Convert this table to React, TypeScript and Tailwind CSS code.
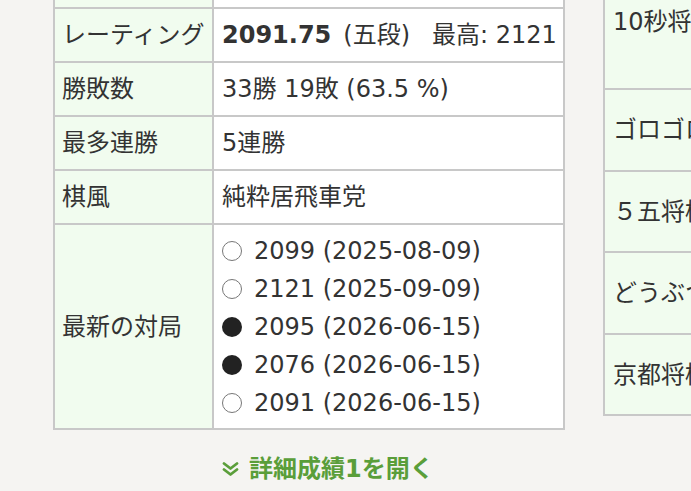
import React from "react";

function Row({
  h,
  label,
  children,
}: {
  h: string;
  label?: React.ReactNode;
  children?: React.ReactNode;
}) {
  return (
    <div className={`flex border-b-2 border-[#c8c8c8] ${h}`}>
      <div className="w-[159px] shrink-0 border-r-2 border-[#c8c8c8] bg-[#f1fcef] flex items-center pl-[7px]">
        {label}
      </div>
      <div className="flex-1 bg-white flex items-center pl-[8px]">{children}</div>
    </div>
  );
}

function Game({ filled, text }: { filled: boolean; text: string }) {
  return (
    <div className="flex items-center h-[38px]">
      {filled ? (
        <span className="w-[20px] h-[20px] rounded-full bg-[#222] shrink-0 mr-[12px]" />
      ) : (
        <span className="w-[20px] h-[20px] rounded-full border-[1.5px] border-[#777] bg-white shrink-0 mr-[12px]" />
      )}
      <span>{text}</span>
    </div>
  );
}

export default function App() {
  const games = [
    { filled: false, text: "2099 (2025-08-09)" },
    { filled: false, text: "2121 (2025-09-09)" },
    { filled: true, text: "2095 (2026-06-15)" },
    { filled: true, text: "2076 (2026-06-15)" },
    { filled: false, text: "2091 (2026-06-15)" },
  ];
  const right = [
    { h: "h-[90px]", t: "10秒将棋", top: true },
    { h: "h-[82px]", t: "ゴロゴロ将棋" },
    { h: "h-[81px]", t: "５五将棋" },
    { h: "h-[82px]", t: "どうぶつしょうぎ" },
    { h: "h-[81px]", t: "京都将棋" },
  ];
  return (
    <div className="w-[691px] h-[491px] overflow-hidden bg-[#f5f4f2] flex items-start text-[#333] text-[24px] leading-[1.5] font-['DejaVu_Sans','Noto_Sans_CJK_JP',sans-serif]">
      <div className="ml-[53px] w-[512px] shrink-0 flex flex-col">
        <div className="border-x-2 border-[#c8c8c8]">
          <Row h="h-[9px]" />
          <Row h="h-[54px]" label="レーティング">
            <span className="font-bold">2091.75</span>
            <span className="ml-[12px]">(五段)</span>
            <span className="ml-[22px]">最高: 2121</span>
          </Row>
          <Row h="h-[54px]" label="勝敗数">
            33勝 19敗 (63.5 %)
          </Row>
          <Row h="h-[54px]" label="最多連勝">
            5連勝
          </Row>
          <Row h="h-[54px]" label="棋風">
            純粋居飛車党
          </Row>
          <Row h="h-[205px]" label="最新の対局">
            <div className="flex flex-col">
              {games.map((g, i) => (
                <Game key={i} filled={g.filled} text={g.text} />
              ))}
            </div>
          </Row>
        </div>
        <div className="mt-[26px] h-[26px] flex items-center pl-[169px] text-[#5a9e3a] font-bold">
          <svg width="17" height="14" viewBox="0 0 17 14" className="shrink-0">
            <polyline points="2,1.5 8.5,6.5 15,1.5" fill="none" stroke="#5a9e3a" strokeWidth="2.8" strokeLinecap="round" strokeLinejoin="round" />
            <polyline points="2,7.5 8.5,12.5 15,7.5" fill="none" stroke="#5a9e3a" strokeWidth="2.8" strokeLinecap="round" strokeLinejoin="round" />
          </svg>
          <span className="ml-[10px]">詳細成績1を開く</span>
        </div>
      </div>
      <div className="ml-[38px] w-[200px] shrink-0 border-l-2 border-[#c8c8c8] flex flex-col">
        {right.map((r, i) => (
          <div
            key={i}
            className={`${r.h} border-b-2 border-[#c8c8c8] bg-[#f1fcef] pl-[8px] flex ${r.top ? "items-start pt-[4px]" : "items-center"}`}
          >
            <span className="whitespace-nowrap">{r.t}</span>
          </div>
        ))}
      </div>
    </div>
  );
}
